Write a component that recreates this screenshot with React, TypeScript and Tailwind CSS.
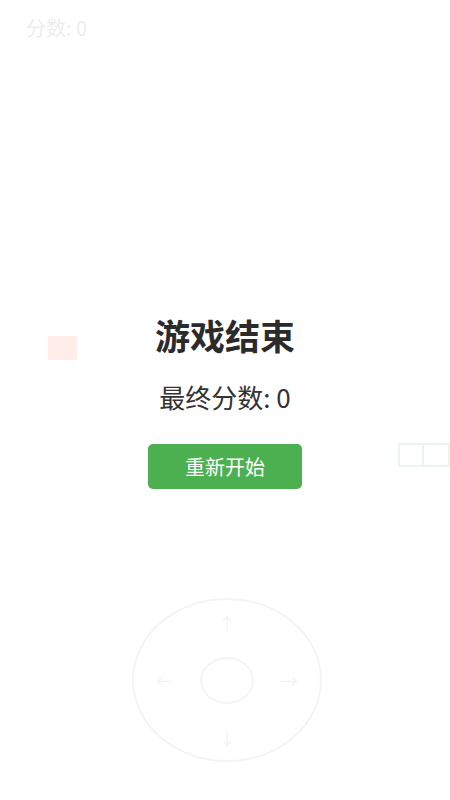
import { useState } from "react";

const font = { fontFamily: '"Noto Sans CJK SC", "Noto Sans", sans-serif' };

export default function App() {
  const [score, setScore] = useState(0);
  const [over, setOver] = useState(true);

  const restart = () => {
    setScore(0);
    setOver(false);
    setTimeout(() => setOver(true), 0);
  };

  return (
    <div className="relative w-[450px] h-[800px] overflow-hidden bg-white flex flex-col" style={font}>
      {/* score */}
      <div className="px-[26px] pt-[18px] text-[20px] leading-none text-[#444]">分数: {score}</div>

      {/* board: food + snake sit on a free canvas */}
      <div className="relative flex-1">
        <div className="absolute left-[48px] top-[298px] w-[29px] h-[24px] bg-[#f04a20]" />
        <div className="absolute left-[398px] top-[405px] flex">
          <div className="w-[26px] h-[24px] border-2 border-[#3c9c3c] bg-white" />
          <div className="w-[26px] h-[24px] border-2 border-l-0 border-[#3c9c3c] bg-white" />
        </div>
      </div>

      {/* joystick */}
      <div className="flex justify-center pl-[4px] pb-[38px]">
        <div className="w-[190px] h-[164px] rounded-[50%] border-2 border-[#88978a] flex flex-col items-center justify-between py-[14px] text-[18px] leading-none text-[#7f8c80]">
          <span>↑</span>
          <div className="w-full flex items-center justify-between px-[22px]">
            <span>←</span>
            <div className="w-[54px] h-[47px] rounded-[50%] border-2 border-[#88978a]" />
            <span>→</span>
          </div>
          <span>↓</span>
        </div>
      </div>

      {/* game over */}
      {over && (
        <div className="absolute inset-0 bg-white/90 flex flex-col items-center pt-[317px]">
          <h1 className="text-[35px] leading-none font-bold text-[#2b2b2b]">游戏结束</h1>
          <p className="mt-[32px] text-[26px] leading-none text-[#333]">最终分数: {score}</p>
          <button
            onClick={restart}
            className="mt-[34px] w-[154px] h-[45px] rounded-[5px] bg-[#4caf50] text-white text-[20px]"
          >
            重新开始
          </button>
        </div>
      )}
    </div>
  );
}
